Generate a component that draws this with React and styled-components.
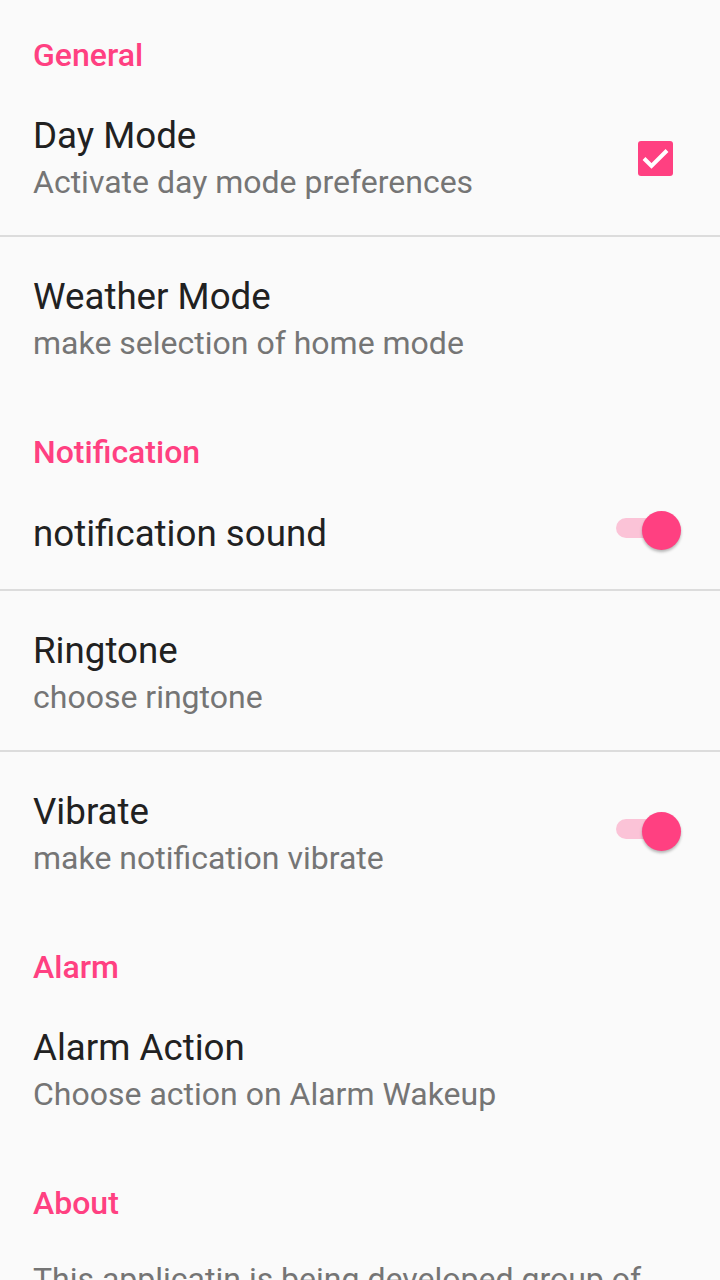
import React from 'react';
import styled, { createGlobalStyle } from 'styled-components';

const GlobalStyle = createGlobalStyle`
  html, body {
    margin: 0;
    padding: 0;
    background: #fafafa;
    overflow: hidden;
  }
  body {
    font-family: Roboto, "Noto Sans", "Liberation Sans", sans-serif;
  }
`;

const Page = styled.div`
  width: 720px;
  min-height: 1280px;
  background: #fafafa;
`;

const Category = styled.section`
  display: flex;
  flex-direction: column;
`;

const CategoryTitle = styled.div`
  padding: ${p => (p.$first ? '35px' : '36px')} 33px 1px;
  font-size: 32px;
  line-height: 40px;
  font-weight: 500;
  color: #ff4081;
`;

const Row = styled.div`
  display: flex;
  align-items: center;
  padding: ${p => (p.$plain ? '35px' : '38px')} 0 33px 33px;
  & + & {
    border-top: 2px solid #dcdcdc;
  }
`;

const TextBlock = styled.div`
  flex: 1;
  display: flex;
  flex-direction: column;
  white-space: nowrap;
`;

const Title = styled.div`
  font-size: 36.7px;
  line-height: 44px;
  color: #212121;
`;

const Summary = styled.div`
  margin-top: ${p => (p.$alone ? '0' : '4px')};
  font-size: 32px;
  line-height: 40px;
  color: #757575;
`;

const CheckBox = styled.div`
  width: 35px;
  height: 35px;
  margin-right: 47px;
  border-radius: 3px;
  background: #ff4081;
  display: flex;
  align-items: center;
  justify-content: center;
`;

const SwitchWrap = styled.div`
  position: relative;
  width: 65px;
  height: 40px;
  margin-right: 39px;
  margin-bottom: 5px;
`;

const Track = styled.div`
  position: absolute;
  left: 0;
  top: 7px;
  width: 52px;
  height: 20px;
  border-radius: 10px;
  background: #fbc3d7;
`;

const Thumb = styled.div`
  position: absolute;
  right: 0;
  top: 0;
  width: 39px;
  height: 39px;
  border-radius: 50%;
  background: #ff4081;
  box-shadow: 0 2px 3px rgba(0, 0, 0, 0.28);
`;

const Check = () => (
  <CheckBox>
    <svg width="35" height="35" viewBox="0 0 35 35">
      <path d="M6 17.5 L13.5 25 L29 9.5" fill="none" stroke="#fff" strokeWidth="4" />
    </svg>
  </CheckBox>
);

const Toggle = () => (
  <SwitchWrap>
    <Track />
    <Thumb />
  </SwitchWrap>
);

const sections = [
  {
    title: 'General',
    items: [
      { title: 'Day Mode', summary: 'Activate day mode preferences', widget: 'check' },
      { title: 'Weather Mode', summary: 'make selection of home mode' },
    ],
  },
  {
    title: 'Notification',
    items: [
      { title: 'notification sound', widget: 'switch' },
      { title: 'Ringtone', summary: 'choose ringtone' },
      { title: 'Vibrate', summary: 'make notification vibrate', widget: 'switch' },
    ],
  },
  {
    title: 'Alarm',
    items: [{ title: 'Alarm Action', summary: 'Choose action on Alarm Wakeup' }],
  },
  {
    title: 'About',
    items: [{ summary: 'This applicatin is being developed group of' }],
  },
];

export default function App() {
  return (
    <Page>
      <GlobalStyle />
      {sections.map((sec, i) => (
        <Category key={sec.title}>
          <CategoryTitle $first={i === 0}>{sec.title}</CategoryTitle>
          {sec.items.map((item, j) => (
            <Row key={j} $plain={!item.title}>
              <TextBlock>
                {item.title && <Title>{item.title}</Title>}
                {item.summary && <Summary $alone={!item.title}>{item.summary}</Summary>}
              </TextBlock>
              {item.widget === 'check' && <Check />}
              {item.widget === 'switch' && <Toggle />}
            </Row>
          ))}
        </Category>
      ))}
    </Page>
  );
}
